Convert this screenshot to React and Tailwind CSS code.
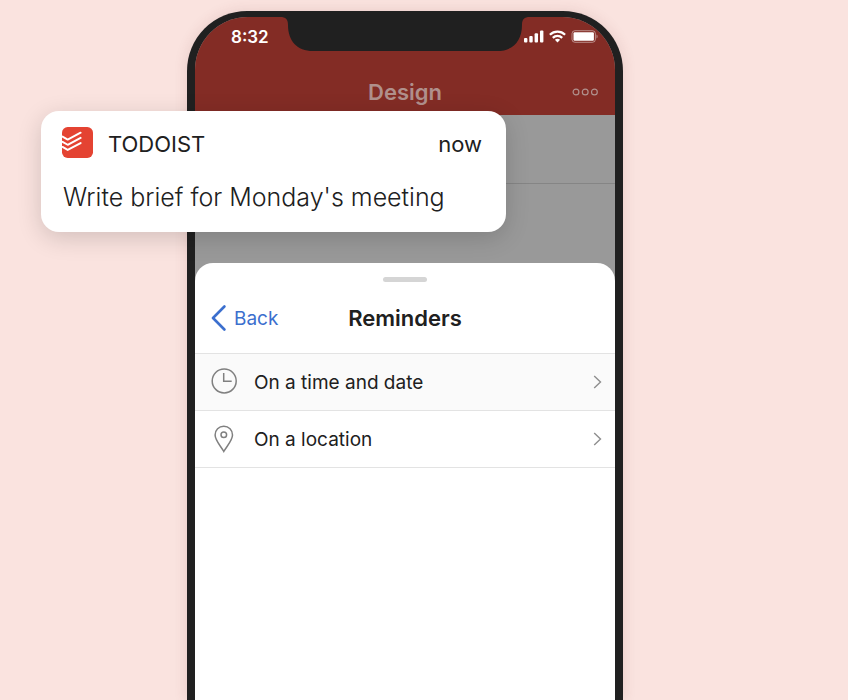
function StatusBar() {
  return (
    <div className="flex h-[40px] items-center justify-between pr-[17px] pl-[36px] text-white">
      <span className="text-[17px] leading-5 font-semibold">8:32</span>
      <div className="flex items-center gap-[5px] pb-[2px]">
        <svg width="20" height="13" viewBox="0 0 20 13" fill="currentColor" aria-hidden="true">
          <rect x="0" y="8" width="3.4" height="4.5" rx="1" />
          <rect x="5.3" y="6" width="3.4" height="6.5" rx="1" />
          <rect x="10.6" y="3.3" width="3.4" height="9.2" rx="1" />
          <rect x="16" y="0.5" width="3.4" height="12" rx="1" />
        </svg>
        <svg width="17" height="13" viewBox="0 0 17 13" fill="none" stroke="currentColor" strokeWidth="2.3" aria-hidden="true">
          <path d="M0.9 4.7C5.2 0.5 11.8 0.5 16.1 4.7" />
          <path d="M3.8 7.8C6.5 5.2 10.5 5.2 13.2 7.8" />
          <path d="M8.5 12.4L5.9 9.8C7.3 8.4 9.7 8.4 11.1 9.8Z" fill="currentColor" stroke="none" />
        </svg>
        <svg width="27" height="13" viewBox="0 0 27 13" aria-hidden="true">
          <rect x="1" y="0.7" width="23.4" height="11.6" rx="3" fill="none" stroke="#fff" strokeOpacity="0.45" />
          <rect x="2.5" y="2.2" width="20.4" height="8.6" rx="1.2" fill="#fff" />
          <path d="M25.5 4.5C27 5.2 27 7.8 25.5 8.5Z" fill="#fff" fillOpacity="0.45" />
        </svg>
      </div>
    </div>
  );
}

function Notch() {
  return (
    <svg
      className="absolute top-0 left-1/2 -translate-x-1/2"
      width="250"
      height="34"
      viewBox="0 0 250 34"
      fill="#202020"
      aria-hidden="true"
    >
      <path d="M0 0H250C244 0 242 2.500 242 8C242 24 233 34 217 34H33C17 34 8 24 8 8C8 2.500 6 0 0 0Z" />
    </svg>
  );
}

function Chevron() {
  return (
    <svg width="9" height="14" viewBox="0 0 9 14" fill="none" stroke="#8e8e8e" strokeWidth="1.4" aria-hidden="true">
      <path d="M1.200 1L7.500 7L1.200 13" />
    </svg>
  );
}

function ClockIcon() {
  return (
    <svg width="26" height="28" viewBox="0 0 26 28" fill="none" stroke="#808080" strokeWidth="1.500" aria-hidden="true">
      <circle cx="13.200" cy="12.900" r="12" />
      <path d="M12.700 5V13.200H20.700" />
    </svg>
  );
}

function PinIcon() {
  return (
    <svg width="26" height="28" viewBox="0 0 26 28" fill="none" stroke="#808080" strokeWidth="1.500" aria-hidden="true">
      <path d="M12.800 26.500C9.800 21 4.100 15.500 4.100 10C4.100 5 7.800 1.200 12.800 1.200S21.500 5 21.500 10C21.500 15.500 15.800 21 12.800 26.500Z" />
      <circle cx="12.800" cy="9.800" r="2.800" />
    </svg>
  );
}

function ReminderRow({ icon, label, className = "" }) {
  return (
    <li className={`border-b border-[#e3e3e3] ${className}`}>
      <button type="button" className="flex h-14 w-full items-center pr-[13px] pl-4 text-left">
        {icon}
        <span className="ml-[17px] flex-1 pt-[2px] text-[19px] leading-6 text-[#202020]">{label}</span>
        <Chevron />
      </button>
    </li>
  );
}

function Notification() {
  return (
    <section className="absolute top-[100px] left-[-146px] w-[465px] rounded-[18px] bg-white px-[22px] pt-[15px] pb-[19px] text-[#202020] shadow-[0_6px_24px_rgba(0,0,0,0.16)]">
      <div className="flex items-center">
        <svg width="31" height="31" viewBox="0 0 30 30" aria-hidden="true" className="-ml-px">
          <rect width="30" height="30" rx="5.500" fill="#e44332" />
          <g fill="none" stroke="#fff" strokeWidth="1.900" strokeLinejoin="round" strokeLinecap="round">
            <path d="M0.500 9.300L5.500 12.200L18 5.500" />
            <path d="M0.500 14.300L5.500 17.200L18 10.500" />
            <path d="M0.500 19.300L5.500 22.200L18 15.500" />
          </g>
        </svg>
        <span className="mt-1 ml-[15px] flex-1 text-[22px] leading-7">TODOIST</span>
        <span className="mt-1 mr-[2px] text-[22px] leading-7">now</span>
      </div>
      <p className="mt-[23px] text-[25px] leading-8 font-light">Write brief for Monday's meeting</p>
    </section>
  );
}

export default function App() {
  return (
    <main className="flex h-screen justify-center overflow-hidden bg-[#fae3df] pt-[11px] pr-[38px] font-[Inter,'Liberation_Sans',sans-serif]">
      <div className="relative flex w-[436px] shrink-0 flex-col rounded-t-[60px] bg-[#202020] px-2 pt-[6px] shadow-[0_0_14px_rgba(120,60,60,0.14)]">
        <div className="relative flex flex-1 flex-col overflow-hidden rounded-t-[53px] bg-[#999999]">
          <header className="h-[98px] bg-[#832c25]">
            <StatusBar />
            <div className="grid h-[70px] grid-cols-[1fr_auto_1fr] items-center px-4 text-[#b0908c]">
              <h1 className="col-start-2 text-[22px] leading-7 font-semibold">Design</h1>
              <button type="button" aria-label="More options" className="justify-self-end">
                <svg width="27" height="8" viewBox="0 0 27 8" fill="none" stroke="currentColor" strokeWidth="1.200" aria-hidden="true">
                  <circle cx="4" cy="4" r="2.900" />
                  <circle cx="13.200" cy="4" r="2.900" />
                  <circle cx="22.400" cy="4" r="2.900" />
                </svg>
              </button>
            </div>
          </header>
          <div className="h-[69px] border-b border-[#858585]" />
          <section className="mt-[79px] flex-1 rounded-t-[18px] bg-white">
            <div className="flex justify-center pt-[14px]">
              <span className="h-[5px] w-[44px] rounded-full bg-[#d5d5d5]" />
            </div>
            <div className="grid h-[71px] grid-cols-[1fr_auto_1fr] items-center px-4">
              <button type="button" className="flex items-center gap-2 justify-self-start text-[#3b6fce]">
                <svg width="15" height="26" viewBox="0 0 15 26" fill="none" stroke="currentColor" strokeWidth="2.600" strokeLinecap="round" strokeLinejoin="round" aria-hidden="true">
                  <path d="M13.400 1.500L2 13L13.400 24.500" />
                </svg>
                <span className="pt-[2px] text-[19px] leading-6">Back</span>
              </button>
              <h2 className="text-[22px] leading-7 font-semibold text-[#202020]">Reminders</h2>
            </div>
            <ul className="border-t border-[#e3e3e3]">
              <ReminderRow icon={<ClockIcon />} label="On a time and date" className="bg-[#fafafa]" />
              <ReminderRow icon={<PinIcon />} label="On a location" />
            </ul>
          </section>
          <Notch />
        </div>
        <Notification />
      </div>
    </main>
  );
}
